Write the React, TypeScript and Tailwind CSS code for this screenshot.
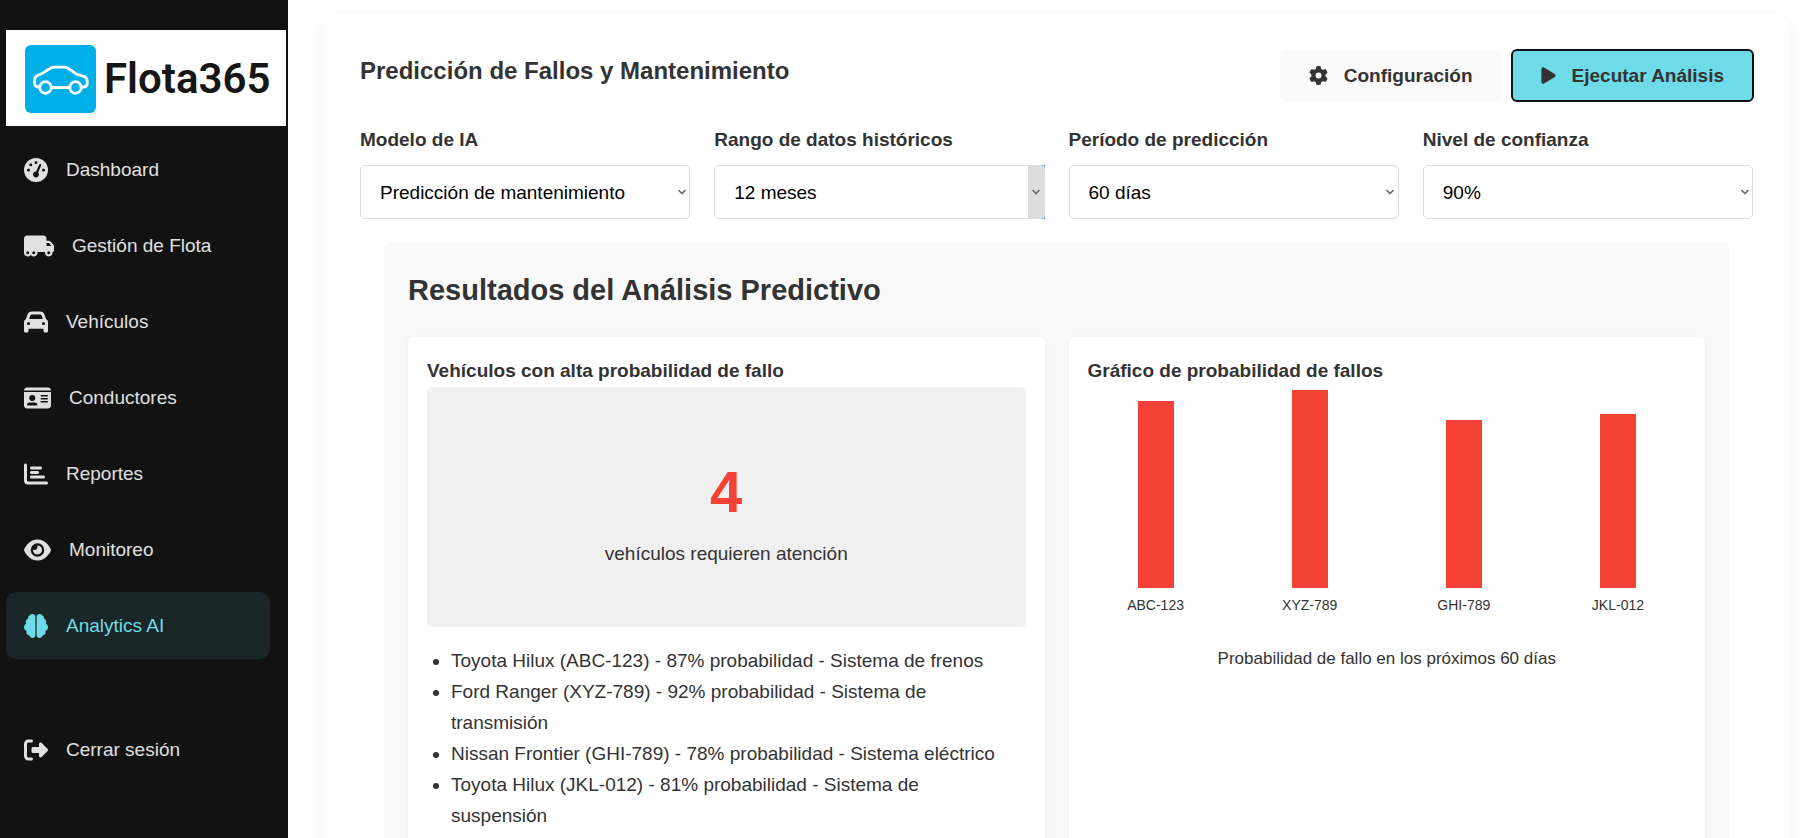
import type { ComponentType } from 'react';
import {
  FaCar,
  FaChartBar,
  FaEye,
  FaGaugeHigh,
  FaGear,
  FaIdCard,
  FaPlay,
  FaRightFromBracket,
  FaTruckMoving,
} from 'react-icons/fa6';

type IconComponent = ComponentType<{ className?: string; 'aria-hidden'?: boolean | 'true' | 'false' }>;
type NavItem = { label: string; icon: IconComponent; size: string; active?: boolean };

function BrainIcon({ className }: { className?: string }) {
  return (
    <svg viewBox="0 0 24 24" fill="currentColor" className={className} aria-hidden="true">
      <path d="M8.600 0C10.200 0 11.400 1.200 11.400 2.800v18.400c0 1.600-1.200 2.800-2.800 2.800-1.500 0-2.700-1-3-2.500-1.800-.1-3.200-1.500-3.200-3.300 0-.4.100-.8.200-1.200C1 16.400 0 15 0 13.200c0-1.600 1-3 2.300-3.700-.4-.5-.6-1.100-.6-1.800 0-1.500 1-2.700 2.400-3-.1-.3-.1-.5-.1-.800 0-1.400 1-2.500 2.100-2.700C6.600.5 7.500 0 8.600 0Z" />
      <path d="M15.400 0C13.800 0 12.600 1.200 12.600 2.800v18.400c0 1.600 1.200 2.800 2.800 2.800 1.500 0 2.700-1 3-2.500 1.800-.1 3.200-1.500 3.200-3.300 0-.4-.1-.8-.2-1.200 1.600-.6 2.600-2 2.600-3.800 0-1.600-1-3-2.300-3.700.4-.5.6-1.100.6-1.800 0-1.500-1-2.700-2.400-3 .1-.3.100-.5.100-.8 0-1.400-1-2.500-2.100-2.700C17.400.5 16.500 0 15.400 0Z" />
    </svg>
  );
}

const navItems: NavItem[] = [
  { label: 'Dashboard', icon: FaGaugeHigh, size: 'w-6' },
  { label: 'Gestión de Flota', icon: FaTruckMoving, size: 'w-[30px]' },
  { label: 'Vehículos', icon: FaCar, size: 'w-6' },
  { label: 'Conductores', icon: FaIdCard, size: 'w-[27px]' },
  { label: 'Reportes', icon: FaChartBar, size: 'w-6' },
  { label: 'Monitoreo', icon: FaEye, size: 'w-[27px]' },
  { label: 'Analytics AI', icon: BrainIcon, size: 'w-6', active: true },
];

const filters = [
  { id: 'modelo', label: 'Modelo de IA', value: 'Predicción de mantenimiento' },
  { id: 'rango', label: 'Rango de datos históricos', value: '12 meses', hovered: true },
  { id: 'periodo', label: 'Período de predicción', value: '60 días' },
  { id: 'confianza', label: 'Nivel de confianza', value: '90%' },
];

const vehicles = [
  { model: 'Toyota Hilux', plate: 'ABC-123', risk: 87, system: 'Sistema de frenos' },
  { model: 'Ford Ranger', plate: 'XYZ-789', risk: 92, system: 'Sistema de transmisión' },
  { model: 'Nissan Frontier', plate: 'GHI-789', risk: 78, system: 'Sistema eléctrico' },
  { model: 'Toyota Hilux', plate: 'JKL-012', risk: 81, system: 'Sistema de suspensión' },
];

const PX_PER_PERCENT = 2.15;

function Logo() {
  return (
    <a href="#" className="flex h-24 w-[280px] items-center gap-2 bg-white pt-[2px] pl-[19px] no-underline">
      <svg viewBox="0 0 71 68" className="h-[68px] w-[71px] shrink-0" aria-hidden="true">
        <rect width="71" height="68" rx="6" fill="#00aee8" />
        <g fill="none" stroke="#fff" strokeWidth="2.8" strokeLinejoin="round" strokeLinecap="round">
          <path d="M14.500 42h-1.500q-3.500-.5-3.500-4v-3q0-3 3-4.500l5-2.200 6.500-4.300q2.500-1.800 5.500-1.800h9.500q3 0 5.500 2l7 5 6.500 2q4.200 1 4.200 4.800v2.500q0 3.200-3.500 3.500h-2.700" />
          <path d="M26.500 42.500h18.500" />
          <circle cx="20.500" cy="42.500" r="5.800" />
          <circle cx="50.500" cy="42.500" r="5.800" />
        </g>
      </svg>
      <span className="font-['Roboto',sans-serif] text-[42px] leading-none font-semibold text-[#161616]">Flota365</span>
    </a>
  );
}

function NavLink({ label, icon: Icon, size, active }: NavItem) {
  return (
    <a
      href="#"
      aria-current={active ? 'page' : undefined}
      className={
        active
          ? 'flex h-[67px] items-center gap-[18px] rounded-[10px] bg-[#1b2628] px-[18px] text-[#6ddbe8]'
          : 'flex h-[67px] items-center gap-[18px] rounded-[10px] px-[18px] text-[#e0e0e0]'
      }
    >
      <Icon className={`h-6 shrink-0 ${size}`} aria-hidden="true" />
      <span>{label}</span>
    </a>
  );
}

function Filter({ id, label, value, hovered }: { id: string; label: string; value: string; hovered?: boolean }) {
  return (
    <div>
      <label htmlFor={id} className="mb-[10px] block font-bold">
        {label}
      </label>
      <div className="relative">
        <select
          id={id}
          defaultValue={value}
          className="block h-[54px] w-full appearance-none rounded-[5px] border border-[#ddd] bg-white pl-[19px] text-black"
        >
          <option>{value}</option>
        </select>
        <span
          className={
            hovered
              ? 'pointer-events-none absolute inset-y-0 right-0 flex w-[17px] bg-[#2a9fd0]'
              : 'pointer-events-none absolute inset-y-0 right-0 flex w-[17px]'
          }
        >
          <span
            className={
              hovered
                ? 'flex flex-1 items-center justify-center rounded-r-[4px] bg-[#ddd]'
                : 'flex flex-1 items-center justify-center'
            }
          >
            <svg viewBox="0 0 10 6" className="h-[6px] w-[10px]" aria-hidden="true">
              <path d="M1.500 1l3.500 3.500 3.500-3.500" fill="none" stroke="#6b6b6b" strokeWidth="1.600" />
            </svg>
          </span>
        </span>
      </div>
    </div>
  );
}

export default function App() {
  return (
    <div className="flex h-screen overflow-hidden bg-white font-['Liberation_Sans',Arial,sans-serif] text-[19px] leading-[31px] text-[#333]">
      <aside className="w-72 shrink-0 bg-[#121212] pt-[30px] pl-[6px]">
        <Logo />
        <nav className="mt-[10px] flex flex-col gap-[9px] pr-[18px]">
          {navItems.map((item) => (
            <NavLink key={item.label} {...item} />
          ))}
          <div className="mt-12">
            <NavLink label="Cerrar sesión" icon={FaRightFromBracket} size="w-6" />
          </div>
        </nav>
      </aside>

      <main className="min-w-0 flex-1 overflow-hidden pt-[14px] pr-6 pl-9">
        <section className="min-h-[1000px] rounded-[14px] bg-white px-9 pt-9 shadow-[0_5px_18px_rgba(0,0,0,0.05)]">
          <header className="mb-[23px] flex items-start justify-between">
            <h1 className="pt-[5px] text-2xl leading-[31px] font-bold">Predicción de Fallos y Mantenimiento</h1>
            <div className="flex gap-[10px]">
              <button
                type="button"
                className="flex h-[51px] items-center gap-4 rounded-[5px] bg-[#f9f9f9] px-[29px] font-bold"
              >
                <FaGear className="size-[19px]" aria-hidden="true" />
                Configuración
              </button>
              <button
                type="button"
                className="flex h-[51px] items-center gap-4 rounded-[5px] bg-[#6ddbe8] px-[29px] font-bold outline-2 -outline-offset-1 outline-[#101010]"
              >
                <FaPlay className="h-[19px] w-[15px]" aria-hidden="true" />
                Ejecutar Análisis
              </button>
            </div>
          </header>

          <div className="grid grid-cols-4 gap-6">
            {filters.map((filter) => (
              <Filter key={filter.id} {...filter} />
            ))}
          </div>

          <section className="mx-6 mt-6 rounded-[5px] bg-[#f9f9f9] px-6 pt-6 pb-6">
            <h2 className="mb-6 text-[29px] leading-[46px] font-bold">Resultados del Análisis Predictivo</h2>
            <div className="grid grid-cols-2 gap-6">
              <article className="rounded-[5px] bg-white p-[19px] shadow-[0_2px_6px_rgba(0,0,0,0.05)]">
                <h3 className="mb-[2px] leading-[29px] font-bold">Vehículos con alta probabilidad de fallo</h3>
                <div className="flex h-60 flex-col items-center justify-center rounded-[5px] bg-[#f0f0f0]">
                  <strong className="text-[58px] leading-[92px] text-[#f44336]">4</strong>
                  <p>vehículos requieren atención</p>
                </div>
                <ul className="mt-[18px] list-disc px-6">
                  {vehicles.map((v) => (
                    <li key={v.plate}>{`${v.model} (${v.plate}) - ${v.risk}% probabilidad - ${v.system}`}</li>
                  ))}
                </ul>
              </article>

              <article className="rounded-[5px] bg-white p-[19px] shadow-[0_2px_6px_rgba(0,0,0,0.05)]">
                <h3 className="mb-[2px] leading-[29px] font-bold">Gráfico de probabilidad de fallos</h3>
                <div className="grid h-[230px] grid-cols-4 items-end gap-[18px]">
                  {vehicles.map((v) => (
                    <div key={v.plate} className="flex flex-col items-center gap-[6px]">
                      <div className="w-9 bg-[#f44336]" style={{ height: Math.round(v.risk * PX_PER_PERCENT) }} />
                      <span className="text-sm leading-[23px]">{v.plate}</span>
                    </div>
                  ))}
                </div>
                <p className="mt-7 text-center text-[17px] leading-[27px]">
                  Probabilidad de fallo en los próximos 60 días
                </p>
              </article>
            </div>
          </section>
        </section>
      </main>
    </div>
  );
}
